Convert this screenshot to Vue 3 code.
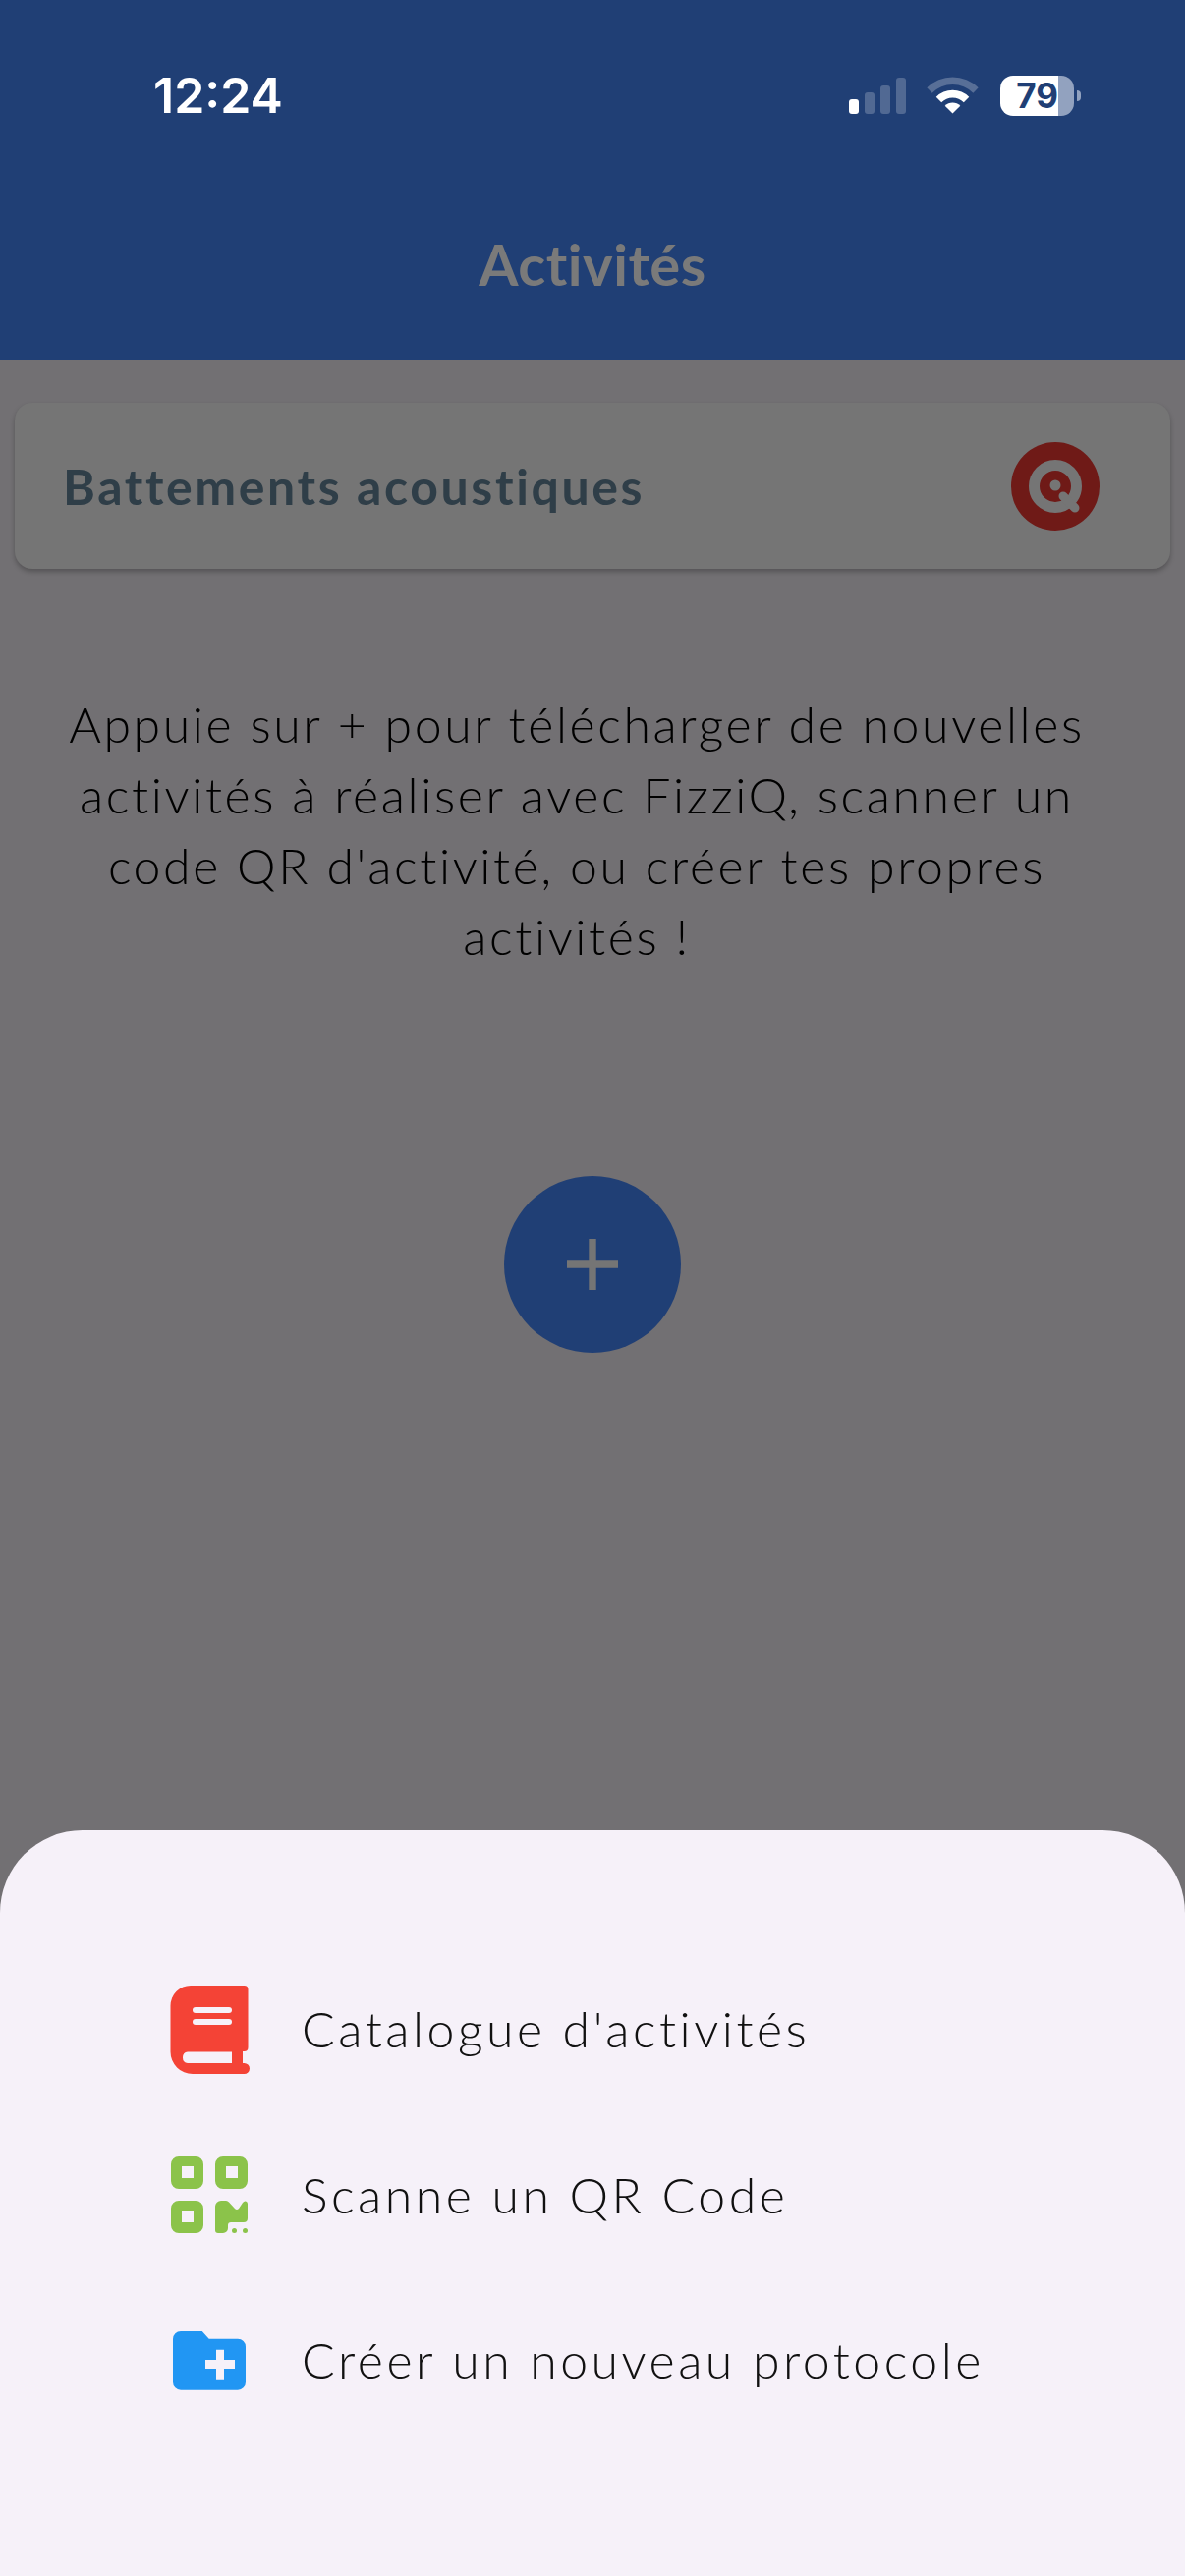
<template>
  <div class="screen">
    <header class="topbar">
      <div class="status">
        <span class="time">12:24</span>
        <div class="status-icons">
          <div class="signal">
            <i v-for="(bar, n) in signalBars" :key="n" :class="{ on: n === 0 }" :style="{ height: bar + 'px' }"></i>
          </div>
          <svg class="wifi" width="54" height="38" viewBox="-1 0 54 38">
            <path fill="#fff" fill-opacity=".25" d="M-.66 11.34A37 37 0 0 1 51.66 11.34L46.36 16.64A29.5 29.5 0 0 0 4.64 16.64Z" />
            <path fill="#fff" d="M8.74 20.74A23.7 23.7 0 0 1 42.26 20.74L36.8 26.2A16 16 0 0 0 14.2 26.2Z" />
            <path fill="#fff" d="M25.5 37.5L17.7 29.7A11 11 0 0 1 33.3 29.7Z" />
          </svg>
          <div class="battery"><span>79</span></div>
          <i class="battery-nub"></i>
        </div>
      </div>
      <h1 class="title">Activités</h1>
    </header>

    <main class="content">
      <div class="card">
        <span class="card-title">Battements acoustiques</span>
        <svg class="card-logo" width="90" height="90" viewBox="0 0 90 90">
          <circle cx="45" cy="45" r="45" fill="#6f1a17" />
          <circle cx="45" cy="45" r="21.5" fill="none" stroke="#757575" stroke-width="11" />
          <circle cx="45" cy="44" r="5.5" fill="#757575" />
          <path d="M53 55L65 67" stroke="#757575" stroke-width="9" stroke-linecap="round" />
        </svg>
      </div>

      <p class="hint">Appuie sur + pour télécharger de nouvelles activités à réaliser avec FizziQ, scanner un code QR d'activité, ou créer tes propres activités !</p>

      <button type="button" class="fab">
        <svg width="52" height="52" viewBox="0 0 52 52">
          <path d="M22.3 0h7.4v22.3H52v7.4H29.7V52h-7.4V29.7H0v-7.4h22.3z" fill="#757575" />
        </svg>
      </button>
    </main>

    <section class="sheet">
      <div class="row">
        <svg width="130" height="130" viewBox="0 0 130 130">
          <path fill="#f44336" fill-rule="evenodd" d="M44 21H98.500a4 4 0 0 1 4 4V84a4 4 0 0 1-4 4H97V100h1.500a5.500 5.500 0 0 1 0 11H46a22.500 22.500 0 0 1-22.500-22.500V41.500A20.500 20.500 0 0 1 44 21ZM41 88.500a5.800 5.800 0 0 0 0 11.500H86V88.500Z" />
          <rect x="46" y="43" width="40" height="6" rx="3" fill="#f6f1f9" />
          <rect x="46" y="55" width="40" height="6" rx="3" fill="#f6f1f9" />
        </svg>
        <span>Catalogue d'activités</span>
      </div>
      <div class="row">
        <svg width="130" height="130" viewBox="0 0 130 130">
          <g fill="#8bc34a" fill-rule="evenodd">
            <path d="M32 25H49a8 8 0 0 1 8 8V50a8 8 0 0 1-8 8H32a8 8 0 0 1-8-8V33a8 8 0 0 1 8-8ZM35 35V47H47V35Z" />
            <path d="M77 25H94a8 8 0 0 1 8 8V50a8 8 0 0 1-8 8H77a8 8 0 0 1-8-8V33a8 8 0 0 1 8-8ZM80 35V47H92V35Z" />
            <path d="M32 70H49a8 8 0 0 1 8 8V95a8 8 0 0 1-8 8H32a8 8 0 0 1-8-8V78a8 8 0 0 1 8-8ZM35 80V92H47V80Z" />
            <path d="M75 70H80a4 4 0 0 1 3 1.500L89 78Q91 80 93 78L97 72Q98.500 70 100 70.500Q102 71 102 73V88a4 4 0 0 1-4 4H85a3 3 0 0 0-3 3V98a5 5 0 0 1-5 5H72a3 3 0 0 1-3-3V76a6 6 0 0 1 6-6Z" />
            <circle cx="88.500" cy="100.500" r="2.500" />
            <circle cx="99.500" cy="100.500" r="2.500" />
          </g>
        </svg>
        <span>Scanne un QR Code</span>
      </div>
      <div class="row">
        <svg width="130" height="130" viewBox="0 0 130 130">
          <path fill="#2196f3" d="M34 33H55.700L62.700 40.700H92a8 8 0 0 1 8 8V84.700a8 8 0 0 1-8 8H34a8 8 0 0 1-8-8V41a8 8 0 0 1 8-8Z" />
          <path fill="#f6f1f9" d="M70 51.700h8V62h11v9H78v10.700h-8V71H59v-9h11Z" />
        </svg>
        <span>Créer un nouveau protocole</span>
      </div>
    </section>
  </div>
</template>

<script setup>
const signalBars = [15, 22, 29, 37]
</script>

<style>
html,
body {
  margin: 0;
  background: #727073;
}
</style>

<style scoped>
.screen {
  width: 1206px;
  height: 2622px;
  display: flex;
  flex-direction: column;
  overflow: hidden;
  background: #727073;
  font-family: Lato, "Noto Sans", sans-serif;
}

.topbar {
  height: 366px;
  flex: none;
  background: #203f75;
  display: flex;
  flex-direction: column;
}

.status {
  height: 78px;
  padding-top: 58px;
  display: flex;
  justify-content: space-between;
  align-items: center;
  padding-left: 156px;
  padding-right: 106px;
}

.time {
  color: #fff;
  font-family: Inter, sans-serif;
  font-size: 50px;
  font-weight: 600;
}

.status-icons {
  display: flex;
  align-items: center;
}

.signal {
  display: flex;
  align-items: flex-end;
  gap: 6px;
  height: 37px;
  margin-right: 21px;
}

.signal i {
  width: 10px;
  border-radius: 3px;
  background: rgba(255, 255, 255, 0.22);
}

.signal i.on {
  background: #fff;
}

.wifi {
  margin-right: 21px;
}

.battery {
  width: 75px;
  height: 41px;
  border-radius: 13px;
  background: linear-gradient(to right, #fff 79%, #92a2bf 79%);
  display: flex;
  align-items: center;
  justify-content: center;
  color: #203f75;
  font-family: Inter, sans-serif;
  font-size: 35px;
  font-weight: 700;
}

.battery-nub {
  width: 4px;
  height: 11px;
  margin-left: 3px;
  border-radius: 0 6px 6px 0;
  background: #92a2bf;
}

.title {
  margin: 97px 0 0;
  text-align: center;
  color: #7a7a7a;
  font-size: 58px;
  font-weight: 700;
  line-height: 72px;
  letter-spacing: 0.5px;
}

.content {
  flex: 1;
  display: flex;
  flex-direction: column;
}

.card {
  height: 169px;
  margin: 44px 15px 0;
  padding: 0 72px 0 49px;
  display: flex;
  align-items: center;
  justify-content: space-between;
  background: #757575;
  border-radius: 18px;
  box-shadow: 0 3px 5px rgba(0, 0, 0, 0.25);
}

.card-title {
  color: #2f3e48;
  font-size: 50px;
  font-weight: 700;
  letter-spacing: 2.6px;
}

.hint {
  margin: 122px 92px 0 60px;
  text-align: center;
  color: #000;
  font-size: 50px;
  font-weight: 300;
  line-height: 72px;
  letter-spacing: 2.6px;
}

.fab {
  width: 180px;
  height: 180px;
  margin: 208px auto 0;
  padding: 0;
  border: none;
  border-radius: 50%;
  background: #203f75;
  display: flex;
  align-items: center;
  justify-content: center;
}

.sheet {
  height: 759px;
  flex: none;
  box-sizing: border-box;
  padding: 117px 0 0 150px;
  background: #f6f1f9;
  border-radius: 84px 84px 0 0;
}

.row {
  height: 170px;
  display: flex;
  align-items: center;
  gap: 27px;
  color: #111;
  font-size: 50px;
  font-weight: 300;
  letter-spacing: 3.5px;
}

.row:nth-child(2) span {
  margin-top: -3px;
}

.row:nth-child(3) span {
  margin-top: -6px;
}
</style>
